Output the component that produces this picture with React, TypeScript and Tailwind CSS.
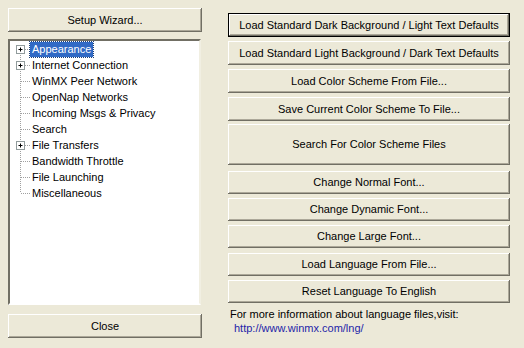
import React from "react";

const font = "font-['Tahoma','Liberation_Sans',Arial,sans-serif] text-[11px] leading-none";

const btnBase =
  "flex w-full items-center justify-center bg-[#ece9d8] text-black " +
  font;
const btnEdge =
  "shadow-[inset_-1px_-1px_0_#716f64,inset_1px_1px_0_#ffffff,inset_-2px_-2px_0_#aca899]";
const btnFocus =
  "border border-black shadow-[inset_-1px_-1px_0_#716f64,inset_1px_1px_0_#ffffff,inset_-2px_-2px_0_#aca899]";

const Btn = ({ label, className = "", focused = false }: { label: string; className?: string; focused?: boolean }) => (
  <div className={`${btnBase} ${focused ? btnFocus : btnEdge} ${className}`}>{label}</div>
);

const treeItems = [
  { label: "Appearance", plus: true, selected: true },
  { label: "Internet Connection", plus: true },
  { label: "WinMX Peer Network" },
  { label: "OpenNap Networks" },
  { label: "Incoming Msgs & Privacy" },
  { label: "Search" },
  { label: "File Transfers", plus: true },
  { label: "Bandwidth Throttle" },
  { label: "File Launching" },
  { label: "Miscellaneous" },
];

const Connector = ({ first, last, plus }: { first: boolean; last: boolean; plus?: boolean }) => (
  <svg width="19" height="16" className="shrink-0">
    <line
      x1="9.5"
      y1={first ? 8 : 0}
      x2="9.5"
      y2={last ? 8 : 16}
      stroke="#a0a0a0"
      strokeDasharray="1 1"
    />
    <line x1="10" y1="8.5" x2="19" y2="8.5" stroke="#a0a0a0" strokeDasharray="1 1" />
    {plus && (
      <g>
        <rect x="5.5" y="4.5" width="8" height="8" fill="#ffffff" stroke="#919b9c" />
        <line x1="7.5" y1="8.5" x2="11.5" y2="8.5" stroke="#000" />
        <line x1="9.5" y1="6.5" x2="9.5" y2="10.5" stroke="#000" />
      </g>
    )}
  </svg>
);

const rightButtons = [
  { label: "Load Standard Dark Background / Light Text Defaults", focused: true, cls: "mt-[13px] h-[24px]" },
  { label: "Load Standard Light Background / Dark Text Defaults", cls: "mt-[4px] h-[24px]" },
  { label: "Load Color Scheme From File...", cls: "mt-[4px] h-[24px]" },
  { label: "Save Current Color Scheme To File...", cls: "mt-[4px] h-[24px]" },
  { label: "Search For Color Scheme Files", cls: "mt-[3px] h-[41px]" },
  { label: "Change Normal Font...", cls: "mt-[6px] h-[23px]" },
  { label: "Change Dynamic Font...", cls: "mt-[4px] h-[23px]" },
  { label: "Change Large Font...", cls: "mt-[4px] h-[23px]" },
  { label: "Load Language From File...", cls: "mt-[5px] h-[23px]" },
  { label: "Reset Language To English", cls: "mt-[4px] h-[23px]" },
];

export default function App() {
  return (
    <div className={`flex h-[348px] w-[524px] bg-[#ece9d8] ${font}`}>
      <div className="ml-[8px] flex w-[194px] flex-col">
        <Btn label="Setup Wizard..." className="mt-[8px] h-[24px]" />
        <div className="mt-[7px] h-[266px] w-[193px] border-2 border-t-[#716f64] border-l-[#716f64] border-r-[#f1efe2] border-b-[#ffffff] bg-white">
          {treeItems.map((it, i) => (
            <div key={it.label} className="flex h-[16px] items-center pl-[1px]">
              <Connector first={i === 0} last={i === treeItems.length - 1} plus={it.plus} />
              <span
                className={
                  it.selected
                    ? "flex h-[15px] items-center bg-[#316ac5] px-[2px] text-white outline outline-1 outline-dotted outline-[#1c3f78]"
                    : "flex h-[15px] items-center px-[2px] text-black"
                }
              >
                {it.label}
              </span>
            </div>
          ))}
        </div>
        <Btn label="Close" className="mt-[9px] h-[24px]" />
      </div>
      <div className="ml-[26px] flex w-[282px] flex-col">
        {rightButtons.map((b) => (
          <Btn key={b.label} label={b.label} focused={b.focused} className={b.cls} />
        ))}
        <div className="mt-[6px] pl-[2px] text-black">For more information about language files,visit:</div>
        <div className="mt-[3px] pl-[6px] text-[#1f1fa8]">http://www.winmx.com/lng/</div>
      </div>
    </div>
  );
}
